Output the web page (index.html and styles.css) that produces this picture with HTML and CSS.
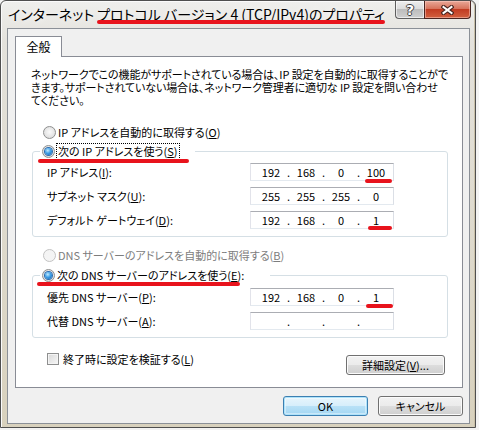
FILE: index.html
```html
<!DOCTYPE html>
<html lang="ja">
<head>
    <meta charset="UTF-8">
    <meta name="viewport" content="width=device-width, initial-scale=1.0">
    <title>インターネット プロトコル バージョン 4 (TCP/IPv4)のプロパティ</title>
    <link rel="stylesheet" href="styles.css">
</head>

<body>
    <div class="window">
        <div class="titlebar">
            <span class="title">インターネット プロトコル バージョン 4 (TCP/IPv4)のプロパティ</span>
            <div class="caption">
                <span class="cap-btn help">?</span>
                <span class="cap-btn close">
                    <svg width="13" height="10" viewBox="0 0 13 10">
                        <path d="M2.5 2L10.5 8M10.5 2L2.5 8" stroke="#4b2620" stroke-width="4.2" stroke-linecap="square" fill="none"/>
                        <path d="M2.5 2L10.5 8M10.5 2L2.5 8" stroke="#ffffff" stroke-width="2" stroke-linecap="square" fill="none"/>
                    </svg>
                </span>
            </div>
        </div>

        <div class="client">
            <div class="tabs"><span class="tab">全般</span></div>
            <div class="panel">
                <p class="desc">ネットワークでこの機能がサポートされている場合は、IP 設定を自動的に取得することがで<br>きます。サポートされていない場合は、ネットワーク管理者に適切な IP 設定を問い合わせ<br>てください。</p>

                <div class="opt first"><span class="radio"></span><span>IP アドレスを自動的に取得する(<u>O</u>)</span></div>

                <fieldset class="group g-ip">
                    <legend class="opt leg-ip"><span class="radio on"></span><span class="focus">次の IP アドレスを使う(<u>S</u>)</span></legend>
                    <div class="row">
                        <span class="lbl">IP アドレス(<u>I</u>):</span>
                        <div class="ip"><span class="oct">192</span><span class="dot">.</span><span class="oct">168</span><span class="dot">.</span><span class="oct">0</span><span class="dot">.</span><span class="oct">100</span></div>
                    </div>
                    <div class="row">
                        <span class="lbl">サブネット マスク(<u>U</u>):</span>
                        <div class="ip"><span class="oct">255</span><span class="dot">.</span><span class="oct">255</span><span class="dot">.</span><span class="oct">255</span><span class="dot">.</span><span class="oct">0</span></div>
                    </div>
                    <div class="row">
                        <span class="lbl">デフォルト ゲートウェイ(<u>D</u>):</span>
                        <div class="ip"><span class="oct">192</span><span class="dot">.</span><span class="oct">168</span><span class="dot">.</span><span class="oct">0</span><span class="dot">.</span><span class="oct">1</span></div>
                    </div>
                </fieldset>

                <div class="opt off"><span class="radio"></span><span>DNS サーバーのアドレスを自動的に取得する(<u>B</u>)</span></div>

                <fieldset class="group g-dns">
                    <legend class="opt leg-dns"><span class="radio on"></span><span>次の DNS サーバーのアドレスを使う(<u>E</u>):</span></legend>
                    <div class="row">
                        <span class="lbl">優先 DNS サーバー(<u>P</u>):</span>
                        <div class="ip"><span class="oct">192</span><span class="dot">.</span><span class="oct">168</span><span class="dot">.</span><span class="oct">0</span><span class="dot">.</span><span class="oct">1</span></div>
                    </div>
                    <div class="row">
                        <span class="lbl">代替 DNS サーバー(<u>A</u>):</span>
                        <div class="ip"><span class="oct"></span><span class="dot">.</span><span class="oct"></span><span class="dot">.</span><span class="oct"></span><span class="dot">.</span><span class="oct"></span></div>
                    </div>
                </fieldset>

                <div class="bottom">
                    <div class="check"><span class="box"></span><span>終了時に設定を検証する(<u>L</u>)</span></div>
                    <button class="btn adv">詳細設定(<u>V</u>)...</button>
                </div>
            </div>

            <div class="footer">
                <button class="btn default">OK</button>
                <button class="btn">キャンセル</button>
            </div>
        </div>

        <!-- red pen marks drawn over the dialog -->
        <span class="mark m-title"></span>
        <span class="mark m-ipopt"></span>
        <span class="mark m-ip"></span>
        <span class="mark m-gw"></span>
        <span class="mark m-dnsopt"></span>
        <span class="mark m-dns"></span>
    </div>
</body>
</html>
```

FILE: styles.css
```css
*,*::before,*::after{
    box-sizing: border-box;
}

body{
    margin: 0;
    width: 479px;
    height: 430px;
    overflow: hidden;
    background: #f3f3f3;
    font-family: "Noto Sans CJK JP", "Noto Sans", sans-serif;
    font-size: 11px;
    font-feature-settings: "palt";
    color: #000;
}

button{
    font: inherit;
    color: inherit;
}

.window{
    position: relative;
    width: 476px;
    height: 428px;
    border: 1px solid #4f4f4f;
    border-radius: 6px 6px 0 0;
    background: linear-gradient(to bottom, #efefed 0, #e4e2dc 40px, #d8d1bd 100%);
    box-shadow: inset 1px 1px 0 #fbfbfb, inset -1px 0 0 #c9c0a8;
    display: flex;
    flex-direction: column;
}

/* title bar */
.titlebar{
    display: flex;
    height: 27px;
    padding-left: 7px;
}

.title{
    font-size: 14px;
    line-height: 18px;
    margin-top: 4px;
    white-space: nowrap;
    text-shadow: 0 0 6px #fff;
}

.caption{
    display: flex;
    margin-left: auto;
    margin-right: 4px;
    height: 18px;
}

.cap-btn{
    display: flex;
    justify-content: center;
    align-items: center;
    height: 18px;
    border: 1px solid #5e5e5e;
    border-top: none;
}

.help{
    width: 29px;
    border-right: none;
    border-radius: 0 0 0 4px;
    background: linear-gradient(to bottom, #eeeeee 0, #dcdcdc 45%, #bdbdbd 50%, #cfcfcf 100%);
    box-shadow: inset 0 0 0 1px rgba(255,255,255,0.6);
    color: #fff;
    font-family: "DejaVu Sans", sans-serif;
    font-weight: bold;
    font-size: 14px;
    text-shadow: 1px 0 #3f3f3f, -1px 0 #3f3f3f, 0 1px #3f3f3f, 0 -1px #3f3f3f;
}

.close{
    width: 47px;
    border-color: #4a2420;
    border-radius: 0 0 4px 0;
    background: linear-gradient(to bottom, #e9a898 0, #d7735c 45%, #c23c22 50%, #d2603f 100%);
    box-shadow: inset 0 0 0 1px rgba(255,210,200,0.5);
}

/* client area */
.client{
    height: 396px;
    margin: 0 5px 3px 6px;
    border: 1px solid #8b9097;
    background: #f0f0f0;
    padding: 7px 6px 0 7px;
}

.tabs{
    display: flex;
    height: 20px;
}

.tab{
    position: relative;
    z-index: 1;
    width: 47px;
    height: 21px;
    border: 1px solid #898c95;
    border-bottom: none;
    background: #fff;
    font-size: 12px;
    line-height: 19px;
    text-align: center;
}

.panel{
    height: 332px;
    border: 1px solid #898c95;
    background: #fff;
    padding: 11px 14px 0 15px;
}

.desc{
    margin: 0;
    line-height: 13px;
    letter-spacing: -0.1px;
    white-space: nowrap;
}

.opt{
    display: flex;
    align-items: center;
    gap: 2px;
    height: 14px;
    line-height: 14px;
    white-space: nowrap;
}

.opt.first{
    margin-top: 18px;
    padding-left: 12px;
}

.opt.off{
    margin-top: 11px;
    padding-left: 12px;
    color: #7d7d7d;
}

.radio{
    position: relative;
    width: 13px;
    height: 13px;
    flex: none;
    border: 1px solid #8e8f8f;
    border-radius: 50%;
    background: radial-gradient(circle at 50% 45%, #fafafa 0, #e4e4e4 60%, #d4d4d4 100%);
}

.off .radio{
    border-color: #c3c3c3;
    background: #f4f4f4;
}

.radio.on::after{
    content: "";
    position: absolute;
    left: 2px;
    top: 2px;
    width: 7px;
    height: 7px;
    border-radius: 50%;
    background: radial-gradient(circle at 40% 35%, #c4ecff 0, #3ea0e8 45%, #0d5aa8 100%);
    box-shadow: 0 0 0 1px #2a6bb0;
}

.focus{
    outline: 1px dotted #000;
    padding: 0 1px;
    line-height: 15px;
}

/* group boxes */
.group{
    margin: 4px 0 0 1px;
    padding: 4px 0 7px 0;
    min-width: 0;
    border: 1px solid #d5dfe5;
    border-radius: 3px;
}

.g-dns{
    margin-top: 5px;
    padding-top: 5px;
}

.group legend{
    height: 16px;
    margin-left: 7px;
    padding: 0 2px;
}

.leg-ip{
    padding-right: 16px !important;
}

.leg-dns{
    padding-right: 26px !important;
}

.row{
    display: flex;
    align-items: center;
    height: 18px;
    padding-left: 14px;
}

.row + .row{
    margin-top: 6px;
}

.lbl{
    width: 203px;
    white-space: nowrap;
}

.ip{
    display: flex;
    width: 144px;
    height: 18px;
    padding-left: 6px;
    border: 1px solid;
    border-color: #abadb3 #dbdfe6 #e3e9ef #e2e3ea;
    line-height: 16px;
}

.oct{
    width: 28px;
    text-align: center;
}

.dot{
    width: 7px;
    text-align: center;
}

/* bottom of panel */
.bottom{
    display: flex;
    justify-content: space-between;
    align-items: flex-start;
    margin-top: 14px;
}

.check{
    display: flex;
    align-items: center;
    gap: 4px;
    height: 14px;
    margin-left: 16px;
    white-space: nowrap;
}

.box{
    width: 12px;
    height: 12px;
    border: 1px solid #8e8f8f;
    background: linear-gradient(135deg, #d8d8d8, #f7f7f7);
    box-shadow: inset 0 0 0 1px #f4f4f4;
}

.btn{
    height: 20px;
    padding: 0;
    border: 1px solid #707070;
    border-radius: 3px;
    background: linear-gradient(to bottom, #f2f2f2 0, #ebebeb 50%, #dddddd 51%, #cfcfcf 100%);
    box-shadow: inset 0 0 0 1px #fbfbfb;
    line-height: 18px;
    text-align: center;
}

.adv{
    width: 99px;
    margin: 3px 3px 0 0;
}

.footer{
    display: flex;
    justify-content: flex-end;
    gap: 10px;
    margin-top: 8px;
}

.footer .btn{
    width: 85px;
}

.btn.default{
    border-color: #3c7fb1;
    background: linear-gradient(to bottom, #e8f5fc 0, #d6eefb 50%, #b8e1f7 51%, #a3d6f2 100%);
    box-shadow: inset 0 0 0 1px #aee3fb, inset 0 0 0 2px rgba(255,255,255,0.4);
}

/* red pen marks */
.mark{
    position: absolute;
    height: 4px;
    border-radius: 2px;
    background: #e8131c;
}

.m-title{ left: 96px; top: 19px; width: 288px; }
.m-ipopt{ left: 37px; top: 158px; width: 151px; }
.m-ip{ left: 364px; top: 178px; width: 27px; }
.m-gw{ left: 367px; top: 225px; width: 24px; }
.m-dnsopt{ left: 36px; top: 281px; width: 203px; }
.m-dns{ left: 365px; top: 303px; width: 27px; }
```
